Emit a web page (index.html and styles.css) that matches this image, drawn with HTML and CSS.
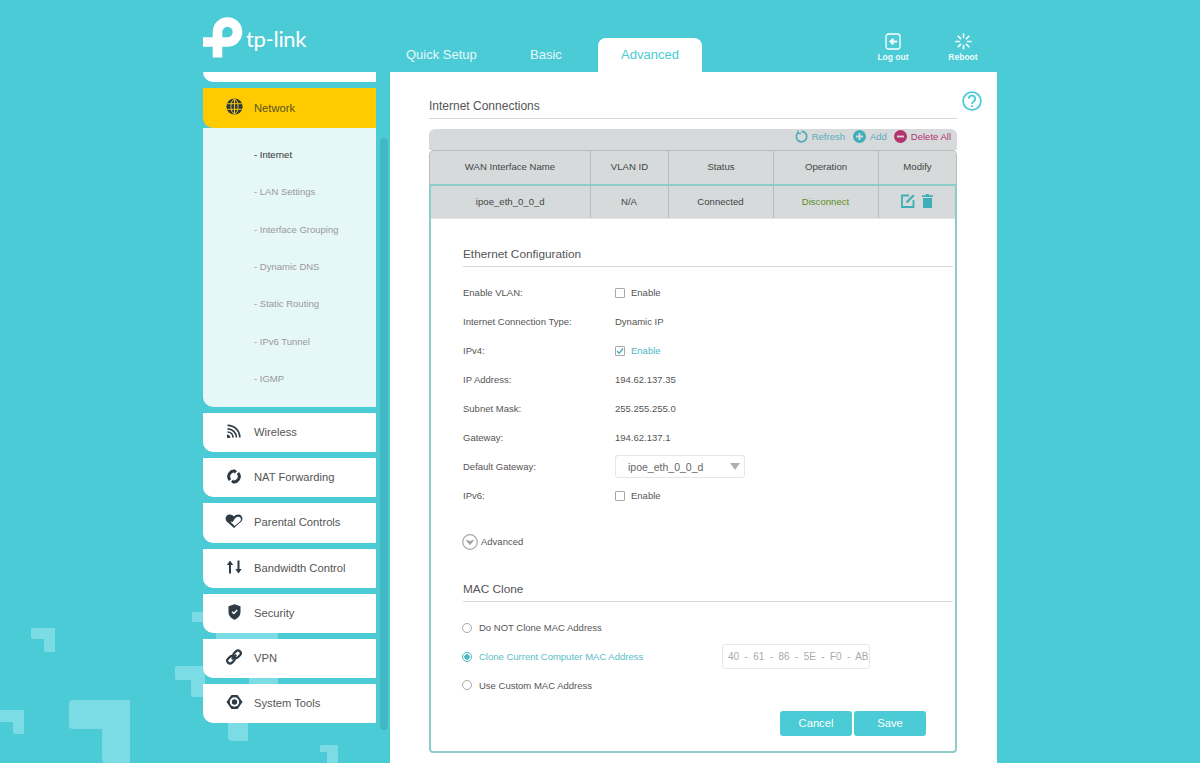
FILE: index.html

```html
<!DOCTYPE html>
<html lang="en">
<head>
  <meta charset="UTF-8">
  <title>TP-Link Internet Connections</title>
  <link rel="stylesheet" href="styles.css">
</head>
<body>

  <svg class="bg-pieces" width="400" height="163" viewBox="0 600 400 163">
    <g fill="#7cdce5">
      <path d="M33 628H55V652H46Q44 652 44 650V639H33Q31 639 31 637V630Q31 628 33 628Z"/>
      <path d="M73 700H130V763H106Q102 763 102 759V729H73Q69 729 69 725V704Q69 700 73 700Z"/>
      <path d="M0 710H24V734H15Q13 734 13 732V722H0Z"/>
      <path d="M177 666H205V697H193Q191 697 191 695V680H177Q175 680 175 678V668Q175 666 177 666Z"/>
      <path d="M192 612H210V622H192Z"/>
      <path d="M216 625H278V690H249V660H216Z"/>
      <path d="M228 700H248V741H232Q228 741 228 737Z"/>
      <path d="M322 745H338V763H327V752H320V747Q320 745 322 745Z"/>
    </g>
  </svg>

  <header class="top">
    <div class="logo">
      <svg width="40" height="41" viewBox="203 17 40 41">
        <path d="M217.5 57.5V32A10 10 0 1 1 227.5 42H203" fill="none" stroke="#fff" stroke-width="9.6"/>
      </svg>
      <span class="logo-text">tp-link</span>
    </div>
    <nav class="tabs">
      <div class="tab tab-quick">Quick Setup</div>
      <div class="tab tab-basic">Basic</div>
      <div class="tab tab-active">Advanced</div>
    </nav>
    <div class="top-actions">
      <div class="top-action">
        <svg width="16" height="17" viewBox="0 0 16 17" fill="none" stroke="#fff">
          <rect x="1" y="1" width="14" height="15" rx="2.5" stroke-width="1.3"/>
          <path d="M12 8.5H6M8.4 5.6 5.4 8.5l3 2.9" stroke-width="1.8"/>
        </svg>
        <span>Log out</span>
      </div>
      <div class="top-action">
        <svg width="17" height="17" viewBox="0 0 17 17" stroke="#fff" stroke-width="1.6" stroke-linecap="round">
          <path d="M8.5 1v3.4M8.5 12.6V16M1 8.5h3.4M12.6 8.5H16M3.2 3.2l2.4 2.4M11.4 11.4l2.4 2.4M3.2 13.8l2.4-2.4M11.4 5.6l2.4-2.4"/>
        </svg>
        <span>Reboot</span>
      </div>
    </div>
  </header>

  <div class="main">
    <aside class="sidebar">
      <div class="menu-stub"></div>

      <div class="menu-item menu-active">
        <span class="menu-icon">
          <svg width="17" height="17" viewBox="0 0 18 18">
            <circle cx="9" cy="9" r="8.6" fill="#2f3b44"/>
            <g fill="none" stroke="#ffcb00" stroke-width="1">
              <ellipse cx="9" cy="9" rx="3.8" ry="7.6"/>
              <path d="M9 1v16M1.4 6h15.2M1.4 12h15.2"/>
            </g>
          </svg>
        </span>
        Network
      </div>
      <div class="submenu">
        <div class="sub-item sub-active">- Internet</div>
        <div class="sub-item">- LAN Settings</div>
        <div class="sub-item">- Interface Grouping</div>
        <div class="sub-item">- Dynamic DNS</div>
        <div class="sub-item">- Static Routing</div>
        <div class="sub-item">- IPv6 Tunnel</div>
        <div class="sub-item">- IGMP</div>
      </div>

      <div class="menu-item">
        <span class="menu-icon">
          <svg width="14" height="14" viewBox="0 0 14 14" fill="none" stroke="#2f3b44" stroke-width="1.7">
            <path d="M.5 1.400C7.500 1.400 12.800 6.700 12.800 13.500"/>
            <path d="M.5 4.800C5.500 4.800 9.400 8.600 9.400 13.500"/>
            <path d="M.5 8C3.700 8 6 10.400 6 13.500"/>
            <path d="M.5 11C1.900 11 2.900 12 2.900 13.500H.5Z" fill="#2f3b44" stroke-width="1"/>
          </svg>
        </span>
        Wireless
      </div>
      <div class="menu-item">
        <span class="menu-icon">
          <svg width="14" height="15" viewBox="0 0 16 17" fill="none" stroke="#2f3b44" stroke-width="3.400">
            <path d="M9.800 2.700A6 6 0 0 0 3.500 12.400"/>
            <path d="M6.200 14.300A6 6 0 0 0 12.500 4.600"/>
            <path d="M8 .2 11.400 2.600 8.600 5.400Z" fill="#2f3b44" stroke="none"/>
            <path d="M8 16.800 4.600 14.400 7.400 11.600Z" fill="#2f3b44" stroke="none"/>
          </svg>
        </span>
        NAT Forwarding
      </div>
      <div class="menu-item">
        <span class="menu-icon">
          <svg width="18" height="14" viewBox="0 0 18 14">
            <path d="M9 14 1.700 7.500C-.8 4.800 1 .4 4.700.4 6.500.4 8 1.300 9 2.600 10 1.300 11.500.4 13.300.4 17 .4 18.800 4.800 16.300 7.500Z" fill="#2f3b44"/>
            <path d="M5.500 7.800H8L9.500 5 11.500 3.300C13 2.300 16 3 16 5.300 16 6.300 15.600 7 15 7.500L9.700 12 8 10.200Z" fill="#fff"/>
          </svg>
        </span>
        Parental Controls
      </div>
      <div class="menu-item">
        <span class="menu-icon">
          <svg width="15" height="14" viewBox="0 0 15 14" fill="#2f3b44">
            <path d="M3 .5 6.200 5H4V13.500H2V5H-.2Z"/>
            <path d="M11.500 13.500 8.300 9H10.500V.5H12.500V9H14.700Z"/>
          </svg>
        </span>
        Bandwidth Control
      </div>
      <div class="menu-item">
        <span class="menu-icon">
          <svg width="13" height="16" viewBox="0 0 13 16">
            <path d="M6.500.3 12.500 2.300V8C12.500 11.800 9.800 14.500 6.500 15.700 3.200 14.500.5 11.800.5 8V2.300Z" fill="#2f3b44"/>
            <path d="M4 7.700 5.900 9.500 9.200 6" fill="none" stroke="#fff" stroke-width="1.400"/>
          </svg>
        </span>
        Security
      </div>
      <div class="menu-item">
        <span class="menu-icon">
          <svg width="16" height="16" viewBox="0 0 16 16" fill="none" stroke="#2f3b44" stroke-width="2.200">
            <rect x=".9" y="8" width="8" height="5.600" rx="2.800" transform="rotate(-45 4.900 10.800)"/>
            <rect x="7.100" y="2.400" width="8" height="5.600" rx="2.800" transform="rotate(-45 11.100 5.200)"/>
            <path d="M5.800 10.200 10.200 5.800"/>
          </svg>
        </span>
        VPN
      </div>
      <div class="menu-item">
        <span class="menu-icon">
          <svg width="17" height="16" viewBox="0 0 17 16">
            <path d="M5.500 1H11.500L13 3 16.500 8 13 13 11.500 15H5.500L4 13 .5 8 4 3Z" fill="#2f3b44"/>
            <circle cx="8.500" cy="8" r="4.700" fill="#fff"/>
            <circle cx="8.500" cy="8" r="2.700" fill="#2f3b44"/>
          </svg>
        </span>
        System Tools
      </div>
    </aside>

    <div class="scrollbar"></div>

    <main class="content">
      <svg class="help" width="20" height="20" viewBox="0 0 20 20" fill="none" stroke="#4acbd6">
        <circle cx="10" cy="10" r="8.900" stroke-width="1.800"/>
        <path d="M6.800 7.800A3.200 3.200 0 1 1 11.600 10.500C10.500 11.200 10 11.700 10 13" stroke-width="1.800"/>
        <path d="M10 14.300V16" stroke-width="1.900"/>
      </svg>

      <h3 class="page-title">Internet Connections</h3>

      <div class="wan-table">
        <div class="toolbar">
          <span class="tool tool-teal">
            <svg width="13" height="13" viewBox="0 0 13 13" fill="none" stroke="#4aa9b5" stroke-width="1.600">
              <path d="M3.600 2.300A5.200 5.200 0 1 0 6.500 1.400"/>
              <path d="M3 .4V3.300H6" stroke-width="1.200"/>
            </svg>
            Refresh
          </span>
          <span class="tool tool-teal">
            <svg width="13" height="13" viewBox="0 0 13 13">
              <circle cx="6.500" cy="6.500" r="6.500" fill="#3faebb"/>
              <path d="M6.500 3v7M3 6.500h7" stroke="#d6dadb" stroke-width="1.800"/>
            </svg>
            Add
          </span>
          <span class="tool tool-red">
            <svg width="13" height="13" viewBox="0 0 13 13">
              <circle cx="6.500" cy="6.500" r="6.500" fill="#b3346f"/>
              <path d="M3 6.500h7" stroke="#d6dadb" stroke-width="1.800"/>
            </svg>
            Delete All
          </span>
        </div>

        <div class="row row-head">
          <div class="cell">WAN Interface Name</div>
          <div class="cell">VLAN ID</div>
          <div class="cell">Status</div>
          <div class="cell">Operation</div>
          <div class="cell">Modify</div>
        </div>

        <div class="expanded">
          <div class="row row-data">
            <div class="cell">ipoe_eth_0_0_d</div>
            <div class="cell">N/A</div>
            <div class="cell">Connected</div>
            <div class="cell cell-green">Disconnect</div>
            <div class="cell cell-icons">
              <svg width="14" height="14" viewBox="0 0 14 14" fill="none" stroke="#3faebb" stroke-width="1.800">
                <path d="M8 1.500H1V13H12.500V6"/>
                <path d="M5.500 8.500 12.800 1.200" stroke-width="2.200"/>
              </svg>
              <svg width="11" height="14" viewBox="0 0 11 14" fill="#3faebb">
                <path d="M4 0H7V1.200H11V3H0V1.200H4ZM1 4H10V14H1Z"/>
              </svg>
            </div>
          </div>

          <div class="form">
            <h4 class="section">Ethernet Configuration</h4>

            <div class="form-row">
              <label>Enable VLAN:</label>
              <span class="check"></span><span class="opt">Enable</span>
            </div>
            <div class="form-row">
              <label>Internet Connection Type:</label>
              <span>Dynamic IP</span>
            </div>
            <div class="form-row">
              <label>IPv4:</label>
              <span class="check check-on">
                <svg width="8" height="8" viewBox="0 0 8 8" fill="none" stroke="#3faebb" stroke-width="1.300"><path d="M1 4 3.200 6.200 7 1.500"/></svg>
              </span><span class="opt opt-on">Enable</span>
            </div>
            <div class="form-row">
              <label>IP Address:</label>
              <span>194.62.137.35</span>
            </div>
            <div class="form-row">
              <label>Subnet Mask:</label>
              <span>255.255.255.0</span>
            </div>
            <div class="form-row">
              <label>Gateway:</label>
              <span>194.62.137.1</span>
            </div>
            <div class="form-row">
              <label>Default Gateway:</label>
              <div class="select">ipoe_eth_0_0_d<span class="caret"></span></div>
            </div>
            <div class="form-row">
              <label>IPv6:</label>
              <span class="check"></span><span class="opt">Enable</span>
            </div>

            <div class="adv-toggle">
              <svg width="16" height="16" viewBox="0 0 16 16">
                <circle cx="8" cy="8" r="7.300" fill="none" stroke="#a8a8a8" stroke-width="1.200"/>
                <path d="M4.600 6.400 8 10.600 11.400 6.400 8 7.600Z" fill="#a0a0a0" stroke="#a0a0a0"/>
              </svg>
              Advanced
            </div>

            <h4 class="section section-mac">MAC Clone</h4>

            <div class="radio-row">
              <span class="radio"></span>Do NOT Clone MAC Address
            </div>
            <div class="radio-row radio-row-on">
              <span class="radio radio-on"></span><span class="radio-label">Clone Current Computer MAC Address</span>
              <div class="mac-box">40&nbsp; -&nbsp; 61&nbsp; -&nbsp; 86&nbsp; -&nbsp; 5E&nbsp; -&nbsp; F0&nbsp; -&nbsp; AB</div>
            </div>
            <div class="radio-row">
              <span class="radio"></span>Use Custom MAC Address
            </div>

            <div class="actions">
              <button>Cancel</button>
              <button>Save</button>
            </div>
          </div>
        </div>
      </div>
    </main>
  </div>

</body>
</html>
```

FILE: styles.css

```css
html, body {
  margin: 0;
  height: 763px;
  overflow: hidden;
}
body {
  position: relative;
  background-color: #4acbd6;
  font-family: "Liberation Sans", Arial, sans-serif;
  color: #555;
}
.bg-pieces {
  position: absolute;
  left: 0;
  bottom: 0;
}

/* header */
.top {
  position: relative;
  display: flex;
  height: 72px;
  padding-left: 203px;
}
.logo {
  display: flex;
  align-items: flex-start;
  width: 187px;
  padding-top: 17px;
  box-sizing: border-box;
}
.logo-text {
  margin: 7px 0 0 3px;
  font-family: "Lato", sans-serif;
  font-size: 22px;
  line-height: 30px;
  letter-spacing: -0.3px;
  color: #fff;
}
.tabs {
  display: flex;
  align-items: flex-end;
  width: 433px;
}
.tab {
  height: 34px;
  line-height: 33px;
  font-size: 13px;
  color: #e6f9fb;
  box-sizing: border-box;
}
.tab-quick {
  width: 124px;
  padding-left: 16px;
}
.tab-basic {
  width: 84px;
  padding-left: 16px;
}
.tab-active {
  width: 104px;
  background-color: #fff;
  color: #4acbd6;
  border-radius: 8px 8px 0 0;
  text-align: center;
}
.top-actions {
  display: flex;
  margin-left: 35px;
}
.top-action {
  width: 70px;
  padding-top: 33px;
  text-align: center;
  font-size: 8.5px;
  font-weight: bold;
  color: #eefbfc;
}
.top-action svg {
  display: block;
  margin: 0 auto 2px;
}

/* sidebar */
.main {
  position: relative;
  display: flex;
  padding-left: 203px;
  height: 691px;
}
.sidebar {
  display: flex;
  flex-direction: column;
  gap: 6px;
  width: 173px;
}
.menu-stub {
  height: 10px;
  background-color: #fff;
  border-radius: 0 0 0 10px;
}
.menu-item {
  display: flex;
  align-items: center;
  box-sizing: border-box;
  height: 39.2px;
  padding-bottom: 1px;
  background-color: #fff;
  border-radius: 0 0 0 10px;
  font-size: 11.2px;
  color: #555;
}
.menu-icon {
  display: flex;
  justify-content: center;
  align-items: center;
  box-sizing: border-box;
  width: 51px;
  height: 24px;
  padding-left: 11px;
  margin-top: -2px;
}
.menu-active {
  height: 40px;
  margin-bottom: -6px;
  background-color: #ffcb00;
  color: #5a5320;
}
.submenu {
  height: 271px;
  padding-top: 8px;
  background-color: #e6f7f8;
  border-radius: 0 0 0 10px;
}
.sub-item {
  height: 37.33px;
  line-height: 37.33px;
  padding-left: 51px;
  font-size: 9.500px;
  color: #999;
}
.sub-active {
  color: #333;
}
.scrollbar {
  flex: none;
  width: 8px;
  height: 592px;
  margin: 66px 2px 0 4px;
  background-color: #42b8c4;
  border-radius: 4px;
}

/* content */
.content {
  position: relative;
  flex: none;
  width: 607px;
  box-sizing: border-box;
  padding: 27px 40px 0 39px;
  background-color: #fff;
}
.help {
  position: absolute;
  left: 572px;
  top: 19px;
}
.page-title {
  margin: 0 0 10px;
  height: 19px;
  line-height: 15px;
  border-bottom: 1px solid #d8d8d8;
  font-size: 12px;
  font-weight: normal;
  color: #555;
}
.wan-table {
  width: 528px;
}
.toolbar {
  display: flex;
  justify-content: flex-end;
  gap: 8px;
  height: 21px;
  padding-right: 6px;
  box-sizing: border-box;
  background-color: #d6dadb;
  border-radius: 6px 6px 0 0;
  font-size: 9.500px;
  line-height: 15px;
}
.tool {
  display: flex;
  align-items: flex-start;
  gap: 4px;
}
.tool svg {
  margin-top: 1px;
}
.tool-teal {
  color: #58aebb;
}
.tool-red {
  margin-left: -1px;
  color: #b3346f;
}
.row {
  display: grid;
  grid-template-columns: 160px 78px 105px 105px 1fr;
  height: 34px;
  background-color: #d6dadb;
  font-size: 9.600px;
  color: #444;
}
.row-head {
  border: 1px solid #b7bcbd;
  border-bottom: 0;
  border-radius: 5px 5px 0 0;
  box-sizing: border-box;
}
.cell {
  display: flex;
  align-items: center;
  justify-content: center;
  box-sizing: border-box;
  padding-bottom: 2px;
  border-left: 1px solid #b7bcbd;
}
.cell:first-child {
  border-left: 0;
}
.cell-green {
  color: #5e8f1e;
}
.cell-icons {
  gap: 7px;
}
.expanded {
  height: 569px;
  box-sizing: border-box;
  border: 2px solid #8ccdc9;
  border-radius: 0 0 4px 4px;
}
.expanded .row {
  height: 32px;
  grid-template-columns: 158.500px 78px 105px 105px 1fr;
  border-bottom: 1px solid #e4e6e6;
  box-sizing: content-box;
}

/* form */
.form {
  padding: 28px 0 0 32px;
  font-size: 9.500px;
  color: #555;
}
.section {
  margin: 0 2px 11px 0;
  height: 19px;
  line-height: 15px;
  border-bottom: 1px solid #d8d8d8;
  font-size: 11.800px;
  font-weight: normal;
  color: #555;
}
.section-mac {
  margin-top: 30px;
  margin-bottom: 12px;
}
.form-row {
  display: flex;
  align-items: center;
  height: 29px;
}
.form-row label {
  width: 152px;
}
.check {
  display: flex;
  align-items: center;
  justify-content: center;
  width: 8px;
  height: 8px;
  border: 1px solid #a8a8a8;
  border-radius: 1px;
  background-color: #fff;
}
.opt {
  margin-left: 6px;
}
.opt-on {
  color: #4cb8c4;
}
.select {
  display: flex;
  align-items: center;
  justify-content: space-between;
  box-sizing: border-box;
  width: 130px;
  height: 23px;
  padding: 0 4px 0 12px;
  border: 1px solid #e6e6e6;
  border-radius: 3px;
  font-size: 10.500px;
  color: #666;
}
.caret {
  border-left: 5px solid transparent;
  border-right: 5px solid transparent;
  border-top: 7px solid #b0b0b0;
}
.adv-toggle {
  display: flex;
  align-items: center;
  gap: 3px;
  margin: 21.500px 0 0 -1px;
  height: 20px;
}
.radio-row {
  display: flex;
  align-items: center;
  height: 28.700px;
  margin-left: -1px;
}
.radio {
  box-sizing: border-box;
  width: 10px;
  height: 10px;
  margin-right: 7px;
  border: 1px solid #a8a8a8;
  border-radius: 50%;
}
.radio-on {
  border-color: #4cb8c4;
  background: radial-gradient(circle, #4cb8c4 0 2.500px, #fff 3px);
}
.radio-row-on {
  color: #58bcc8;
}
.radio-label {
  width: 243px;
}
.mac-box {
  box-sizing: border-box;
  width: 148px;
  height: 25px;
  line-height: 24px;
  padding-left: 5px;
  border: 1px solid #e8e8e8;
  border-radius: 3px;
  font-size: 10px;
  letter-spacing: -0.05px;
  color: #aaa;
  white-space: nowrap;
}
.actions {
  display: flex;
  gap: 2px;
  margin: 11px 0 0 317px;
}
.actions button {
  width: 72px;
  height: 25px;
  padding: 0;
  border: 0;
  border-radius: 3px;
  background-color: #4acbd6;
  font-family: inherit;
  font-size: 11.200px;
  color: #fff;
}
```
